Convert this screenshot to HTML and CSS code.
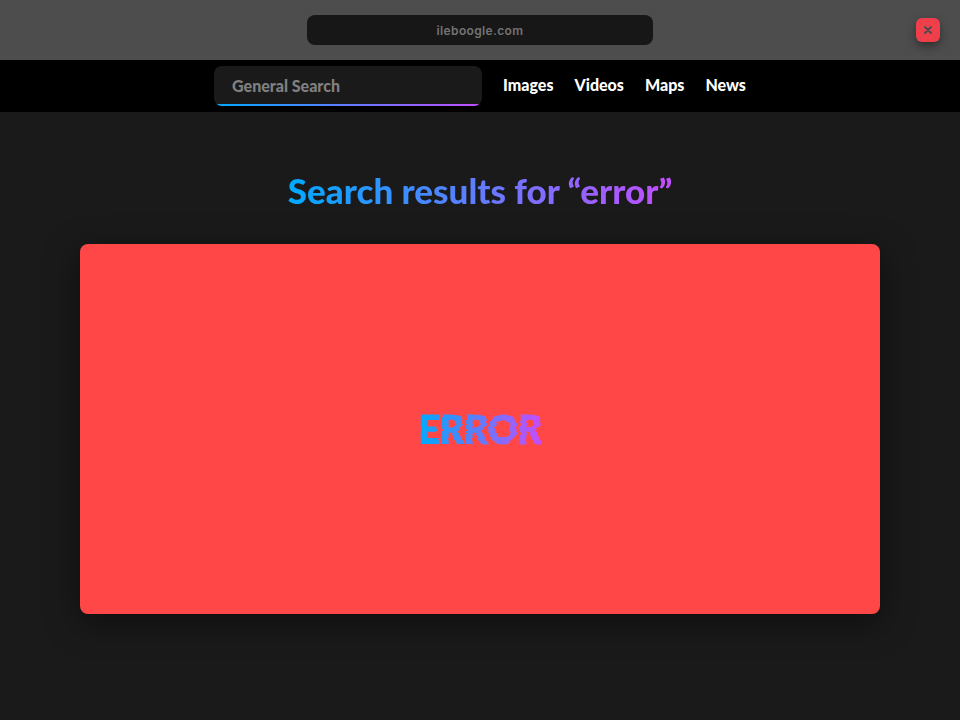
FILE: index.html
```html
<!DOCTYPE html>
<html lang="en">
<head>
<meta charset="utf-8">
<meta name="viewport" content="width=device-width, initial-scale=1">
<title>ileboogle.com</title>
<link rel="stylesheet" href="styles.css">
</head>
<body>
<header class="browser-bar">
  <input class="address" type="text" value="ileboogle.com" aria-label="Address" readonly>
  <button class="close" type="button" aria-label="Close">
    <svg viewBox="0 0 8 8" width="8" height="8" aria-hidden="true"><path d="M1 1 7 7M7 1 1 7"/></svg>
  </button>
</header>
<nav class="site-nav">
  <div class="search"><input class="search-input" type="text" placeholder="General Search" aria-label="General Search"></div>
  <a href="#images">Images</a>
  <a href="#videos">Videos</a>
  <a href="#maps">Maps</a>
  <a href="#news">News</a>
</nav>
<main class="results">
  <h1 class="title">Search results for “error”</h1>
  <section class="panel"><p class="error">ERROR</p></section>
</main>
<svg class="defs" width="0" height="0" aria-hidden="true">
  <filter id="glitch" x="-10%" y="0%" width="120%" height="100%">
    <feTurbulence type="fractalNoise" baseFrequency="0.004 0.3" numOctaves="1" seed="4" result="noise"/>
    <feDisplacementMap in="SourceGraphic" in2="noise" scale="6" xChannelSelector="R"/>
  </filter>
</svg>
</body>
</html>
```

FILE: styles.css
```css
* {
  box-sizing: border-box;
}

body {
  margin: 0;
  min-height: 100vh;
  background: #1a1a1a;
  color: #fff;
  font-family: Lato, "Liberation Sans", sans-serif;
}

.browser-bar {
  display: grid;
  grid-template-columns: 1fr 36vw 1fr;
  align-items: center;
  height: 60px;
  padding: 0 20px;
  background: #4d4d4d;
}

.address {
  grid-column: 2;
  width: 100%;
  height: 30px;
  border: 0;
  border-radius: 8px;
  padding: 0;
  background: #171717;
  color: #737373;
  font: 600 12px/16px Inter, "Liberation Sans", sans-serif;
  letter-spacing: 0.03em;
  text-align: center;
  outline: none;
}

.close {
  grid-column: 3;
  justify-self: end;
  display: grid;
  place-items: center;
  width: 24px;
  height: 24px;
  padding: 0;
  border: 0;
  border-radius: 6px;
  background: #ee3f4a;
  box-shadow: 0 4px 10px rgba(0, 0, 0, 0.4);
}

.close path {
  fill: none;
  stroke: #4d4d4d;
  stroke-width: 2;
  stroke-linecap: round;
}

.site-nav {
  display: flex;
  align-items: center;
  justify-content: center;
  gap: 21px;
  height: 52px;
  background: #000;
  font-size: 16px;
  font-weight: 900;
}

.site-nav a {
  padding-bottom: 2px;
  color: #fff;
  line-height: 20px;
  text-decoration: none;
}

.search {
  width: 268px;
  height: 40px;
  border-radius: 8px;
  background: linear-gradient(90deg, #0af, #c44dff) bottom / 100% 2px no-repeat #1a1a1a;
  overflow: hidden;
}

.search-input {
  display: block;
  width: 100%;
  height: 100%;
  border: 0;
  padding: 0 18px 2px;
  background: transparent;
  color: #fff;
  font: inherit;
  outline: none;
}

.search-input::placeholder {
  color: #808080;
  opacity: 1;
}

.results {
  display: flex;
  flex-direction: column;
  align-items: center;
  padding: 56px 80px 40px;
}

.title,
.error {
  margin: 0;
  background: linear-gradient(90deg, #0af, #c44dff);
  background-clip: text;
  -webkit-background-clip: text;
  color: transparent;
}

.title {
  font-size: 35px;
  font-weight: 900;
  line-height: 44px;
}

.panel {
  display: grid;
  place-items: center;
  width: 100%;
  min-height: 370px;
  margin-top: 32px;
  border-radius: 8px;
  background: #ff4747;
  box-shadow: 0 8px 32px rgba(0, 0, 0, 0.5);
}

.error {
  font-size: 37px;
  font-weight: 900;
  line-height: 48px;
  -webkit-text-stroke: 1px transparent;
  filter: url(#glitch);
}

.defs {
  position: absolute;
}
```
